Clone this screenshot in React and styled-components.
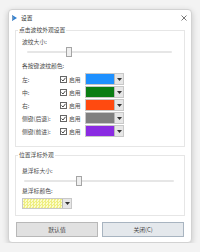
import React from 'react';
import styled, { createGlobalStyle } from 'styled-components';

const Global = createGlobalStyle`
  html, body { margin: 0; padding: 0; background: #f3f3f3; }
  body { font-family: "Noto Sans CJK SC", "Noto Sans", sans-serif; color: #4a4a4a; }
  * { box-sizing: border-box; }
`;

const FS = '5.8px';

const Page = styled.div`
  padding: 9px 8px 0;
`;

const Window = styled.div`
  width: 184px;
  height: 234px;
  background: #ffffff;
  border: 1px solid #d2d2d2;
  border-radius: 4px;
  box-shadow: 0 2px 6px rgba(0, 0, 0, 0.2);
  display: flex;
  flex-direction: column;
`;

const TitleBar = styled.div`
  height: 16px;
  display: flex;
  align-items: center;
  padding: 0 4px 0 3px;
  font-size: ${FS};
  line-height: 8px;
  color: #333;
`;

const TitleText = styled.span`
  margin-left: 4px;
  flex: 1;
`;

const Body = styled.div`
  flex: 1;
  display: flex;
  flex-direction: column;
  padding: 0 6px 0 6px;
`;

const Group = styled.fieldset`
  margin: 0 0 ${p => p.$mb || 0}px;
  padding: 0 0 ${p => p.$pb}px 2px;
  border: 1px solid #e6e6e6;
  min-width: 0;
`;

const Legend = styled.legend`
  font-size: ${FS};
  line-height: 8px;
  height: 8px;
  padding: 0 1px;
  color: #444;
`;

const Content = styled.div`
  padding: ${p => p.$pt}px 0 0 4px;
  display: flex;
  flex-direction: column;
`;

const Label = styled.div`
  font-size: ${FS};
  line-height: 8px;
  height: 8px;
  margin-top: ${p => p.$mt || 0}px;
  white-space: nowrap;
`;

const Slider = styled.div`
  position: relative;
  height: 10px;
  margin: ${p => p.$mt || 0}px 0 0 ${p => p.$ml}px;
  width: ${p => p.$w}px;
`;

const Track = styled.div`
  position: absolute;
  left: 0;
  right: 0;
  top: 4px;
  height: 2px;
  background: #e6e6e6;
  border-radius: 1px;
`;

const Thumb = styled.div`
  position: absolute;
  top: 0;
  width: 6px;
  height: 10px;
  background: #efefef;
  border: 1px solid #a5a5a5;
`;

const Rows = styled.div`
  margin-top: 3px;
  display: flex;
  flex-direction: column;
`;

const Row = styled.div`
  height: 13px;
  display: flex;
  align-items: center;
`;

const RowLabel = styled.div`
  width: 38px;
  font-size: ${FS};
  line-height: 8px;
  white-space: nowrap;
`;

const Check = styled.label`
  width: 25px;
  display: flex;
  align-items: center;
  font-size: ${FS};
  line-height: 8px;
`;

const Box = styled.span`
  width: 7px;
  height: 7px;
  border: 1px solid #666;
  background: #fff;
  display: flex;
  align-items: center;
  justify-content: center;
  margin-right: 2px;
`;

const Combo = styled.div`
  display: flex;
  height: ${p => p.$h}px;
  margin-top: ${p => p.$mt || 0}px;
  border: 1px solid #c8c8c8;
  background: #fff;
  align-self: flex-start;
`;

const Swatch = styled.div`
  width: ${p => p.$w}px;
  background: ${p => p.$c};
  ${p => p.$pattern && `
    background-color: #fbfbc8;
    background-image: repeating-conic-gradient(#eeee80 0 25%, #fbfbcc 0 50%);
    background-size: 3px 3px;
  `}
`;

const Drop = styled.div`
  width: 9px;
  background: #e6e6e6;
  border-left: 1px solid #b8b8b8;
  display: flex;
  align-items: center;
  justify-content: center;
`;

const Buttons = styled.div`
  margin-top: 6px;
  display: flex;
  gap: 4px;
  padding: 0 1px;
`;

const Button = styled.button`
  width: 82px;
  height: 15px;
  padding: 0;
  font-family: inherit;
  font-size: ${FS};
  line-height: 8px;
  color: #444;
  background: ${p => (p.$focus ? '#e4e8ec' : '#e1e1e1')};
  border: 1px solid ${p => (p.$focus ? '#a8b4c0' : '#b8b8b8')};
`;

const Arrow = () => (
  <svg width="5" height="3" viewBox="0 0 5 3">
    <path d="M0 0H5L2.5 3Z" fill="#333" />
  </svg>
);

const Tick = () => (
  <svg width="5" height="5" viewBox="0 0 5 5">
    <path d="M0.5 2.5L2 4L4.5 0.8" fill="none" stroke="#333" strokeWidth="0.9" />
  </svg>
);

const rows = [
  ['左:', '#1e90ff'],
  ['中:', '#0a7d14'],
  ['右:', '#ff4a10'],
  ['侧键(后退):', '#808080'],
  ['侧键(前进):', '#8a2be2'],
];

export default function App() {
  return (
    <>
      <Global />
      <Page>
        <Window>
          <TitleBar>
            <svg width="5" height="6" viewBox="0 0 5 6">
              <path d="M0 0L5 3L0 6Z" fill="#2a7fd4" />
              <path d="M0 0L2 3L0 6Z" fill="#7a9cc0" />
            </svg>
            <TitleText>设置</TitleText>
            <svg width="6" height="6" viewBox="0 0 6 6">
              <path d="M0.5 0.5L5.5 5.5M5.5 0.5L0.5 5.5" stroke="#555" strokeWidth="0.8" />
            </svg>
          </TitleBar>
          <Body>
            <Group $pb={8} $mb={4}>
              <Legend>点击波纹外观设置</Legend>
              <Content $pt={4}>
                <Label>波纹大小:</Label>
                <Slider $mt={1} $ml={5} $w={145}>
                  <Track />
                  <Thumb style={{ left: 39 }} />
                </Slider>
                <Label $mt={5}>各按键波纹颜色:</Label>
                <Rows>
                  {rows.map(([name, color]) => (
                    <Row key={name}>
                      <RowLabel>{name}</RowLabel>
                      <Check>
                        <Box><Tick /></Box>
                        启用
                      </Check>
                      <Combo $h={12}>
                        <Swatch $w={28} $c={color} />
                        <Drop><Arrow /></Drop>
                      </Combo>
                    </Row>
                  ))}
                </Rows>
              </Content>
            </Group>
            <Group $pb={6}>
              <Legend>位置浮标外观</Legend>
              <Content $pt={8}>
                <Label>悬浮标大小:</Label>
                <Slider $mt={1} $ml={2} $w={150}>
                  <Track />
                  <Thumb style={{ left: 52 }} />
                </Slider>
                <Label $mt={1}>悬浮标颜色:</Label>
                <Combo $h={11} $mt={3}>
                  <Swatch $w={39} $pattern />
                  <Drop><Arrow /></Drop>
                </Combo>
              </Content>
            </Group>
            <Buttons>
              <Button>默认值</Button>
              <Button $focus>关闭(C)</Button>
            </Buttons>
          </Body>
        </Window>
      </Page>
    </>
  );
}
